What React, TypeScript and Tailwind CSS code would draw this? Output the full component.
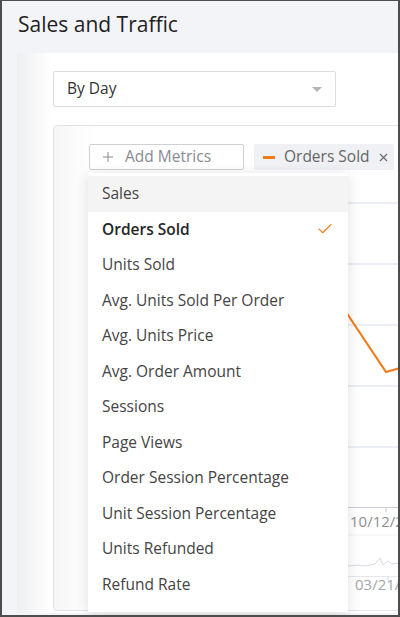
import { Plus, X, Check } from "lucide-react";

const METRICS = [
  "Sales",
  "Orders Sold",
  "Units Sold",
  "Avg. Units Sold Per Order",
  "Avg. Units Price",
  "Avg. Order Amount",
  "Sessions",
  "Page Views",
  "Order Session Percentage",
  "Unit Session Percentage",
  "Units Refunded",
  "Refund Rate",
];

function ChartBackdrop() {
  // page coordinates, card inner box starts at (54,125)
  return (
    <svg className="absolute left-0 top-0" width="346" height="486" viewBox="54 125 346 486">
      {[202, 263, 324, 385, 446].map((y) => (
        <line key={y} x1="300" x2="400" y1={y} y2={y} stroke="#e4e8f1" strokeWidth="1.5" />
      ))}
      <line x1="300" x2="400" y1="506.5" y2="506.5" stroke="#c9ccd3" strokeWidth="1" />
      <line x1="386" x2="386" y1="506" y2="511" stroke="#c9ccd3" strokeWidth="1" />
      <polyline points="340,302 386,371 400,367" fill="none" stroke="#f07d1c" strokeWidth="2.2" />
      <text x="350" y="526" fontSize="15" fill="#8d8f94" fontFamily="Open Sans, sans-serif">10/12/2</text>
      <line x1="300" x2="400" y1="534" y2="534" stroke="#eef0f4" strokeWidth="1" />
      <polyline
        points="348,565 358,564 365,565 375,563 380,557 383,564 388,560 392,563 400,562"
        fill="none"
        stroke="#d6dae3"
        strokeWidth="1"
      />
      <line x1="300" x2="400" y1="575.5" y2="575.5" stroke="#e4e8f1" strokeWidth="1" />
      <line x1="388" x2="388" y1="575" y2="580" stroke="#d6dae3" strokeWidth="1" />
      <text x="355" y="589" fontSize="15" fill="#a5a7ac" fontFamily="Open Sans, sans-serif">03/21/2</text>
    </svg>
  );
}

export default function App() {
  return (
    <div className="w-[400px] h-[617px] overflow-hidden bg-[#f3f4f7] border-2 border-t border-[#4d4d4d] flex flex-col font-['Open_Sans',sans-serif]">
      {/* Page title */}
      <div className="h-[52px] shrink-0 pl-4 pt-[8px]">
        <h1 className="text-[21px] leading-[30px] text-[#1f1f1f]">Sales and Traffic</h1>
      </div>

      {/* White panel */}
      <div className="flex-1 ml-[15px] mb-[2px] bg-[linear-gradient(90deg,#eeeff2,#ffffff_34px)] flex flex-col pl-[36px] pt-[18px]">
        <div className="w-[283px] h-[36px] shrink-0 bg-white border border-[#dcdde0] rounded-[2px] flex items-center justify-between pl-[13px] pr-[13px]">
          <span className="text-[15.5px] text-[#333]">By Day</span>
          <span className="w-0 h-0 border-l-[5px] border-r-[5px] border-t-[5px] border-l-transparent border-r-transparent border-t-[#b5b5b5]" />
        </div>

        {/* Chart card */}
        <div className="relative mt-[18px] mb-[2px] flex-1 w-[420px] border border-[#e2e3e6] rounded-[4px] bg-[linear-gradient(90deg,#f6f6f7,#ffffff_40px)]">
          <ChartBackdrop />

          <div className="relative flex items-center gap-[10px] pl-[35px] pt-[18px]">
            <div className="relative">
              <button className="w-[155px] h-[26px] bg-white border border-[#cfd0d3] rounded-[2px] flex items-center gap-[9px] pl-[10px] text-[15.5px] text-[#8a8b8f] whitespace-nowrap">
                <Plus className="w-[16px] h-[16px]" strokeWidth={1.5} />
                Add Metrics
              </button>

              {/* Metrics menu */}
              <div className="absolute left-[-1px] top-[29px] w-[260px] bg-white rounded-[2px] shadow-[0_2px_14px_rgba(0,0,0,0.13)] pt-[3px] pb-[10px] z-10">
                {METRICS.map((m, i) => (
                  <div
                    key={m}
                    className={`h-[35.5px] flex items-center justify-between pl-[14px] pr-[14px] text-[15.5px] whitespace-nowrap ${
                      i === 0 ? "bg-[#f4f4f5] text-[#444]" : i === 1 ? "font-semibold text-[#262626]" : "text-[#444]"
                    }`}
                  >
                    <span>{m}</span>
                    {i === 1 && <Check className="w-[18px] h-[18px] text-[#f07d1c]" strokeWidth={1.5} />}
                  </div>
                ))}
              </div>
            </div>

            <div className="h-[26px] w-[140px] shrink-0 bg-[#f0f1f4] rounded-[2px] flex items-center pl-[9px] text-[15.5px] text-[#666] whitespace-nowrap">
              <span className="w-[12px] h-[3px] bg-[#f07d1c] mr-[9px]" />
              Orders Sold
              <X className="w-[13px] h-[13px] ml-[7px] text-[#666]" strokeWidth={2} />
            </div>
          </div>
        </div>
      </div>
    </div>
  );
}
